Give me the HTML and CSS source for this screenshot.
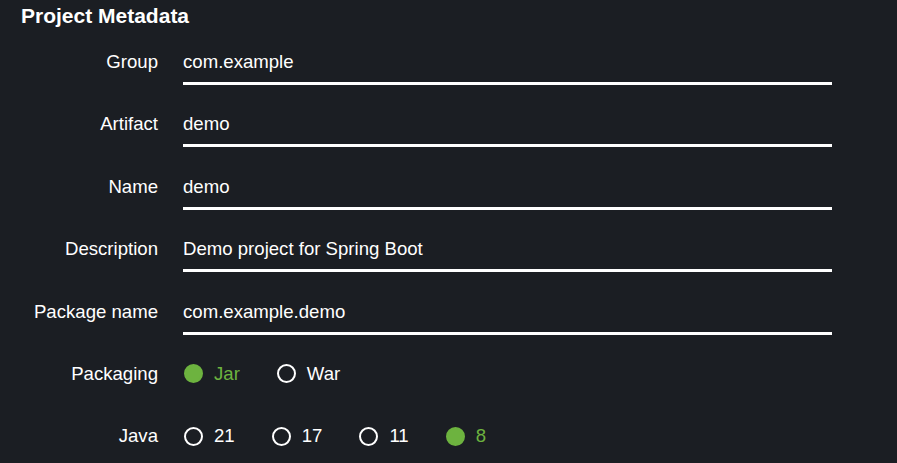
FILE: index.html
```html
<!DOCTYPE html>
<html lang="en">
<head>
<meta charset="utf-8">
<title>Project Metadata</title>
<link rel="stylesheet" href="styles.css">
</head>
<body>
<section class="panel">
  <h1 class="title">Project Metadata</h1>
  <div class="form">
    <label class="label">Group</label>
    <div class="field"><span class="value">com.example</span></div>

    <label class="label">Artifact</label>
    <div class="field"><span class="value">demo</span></div>

    <label class="label">Name</label>
    <div class="field"><span class="value">demo</span></div>

    <label class="label">Description</label>
    <div class="field"><span class="value">Demo project for Spring Boot</span></div>

    <label class="label">Package name</label>
    <div class="field"><span class="value">com.example.demo</span></div>

    <label class="label">Packaging</label>
    <div class="radios">
      <span class="radio checked"><span class="dot"></span>Jar</span>
      <span class="radio"><span class="dot"></span>War</span>
    </div>

    <label class="label">Java</label>
    <div class="radios">
      <span class="radio"><span class="dot"></span>21</span>
      <span class="radio"><span class="dot"></span>17</span>
      <span class="radio"><span class="dot"></span>11</span>
      <span class="radio checked"><span class="dot"></span>8</span>
    </div>
  </div>
</section>
</body>
</html>
```
FILE: styles.css
```css
html, body {
  margin: 0;
  padding: 0;
  background: #1b1e23;
}
body {
  font-family: "Liberation Sans", Arial, sans-serif;
  color: #ffffff;
  width: 897px;
  height: 463px;
  overflow: hidden;
}
.panel {
  padding-top: 4px;
}
.title {
  margin: 0;
  padding-left: 21px;
  font-size: 21px;
  line-height: 24px;
  font-weight: bold;
}
.form {
  display: grid;
  grid-template-columns: 158px 649px;
  column-gap: 25px;
  grid-auto-rows: 35px;
  row-gap: 27.4px;
  margin-top: 22px;
  font-size: 18.6px;
  line-height: 24px;
}
.label {
  text-align: right;
}
.field {
  padding-bottom: 8px;
  border-bottom: 3px solid #ffffff;
  height: 24px;
}
.radios {
  display: flex;
  align-items: center;
  height: 24px;
  gap: 37px;
  padding-left: 1px;
}
.radio {
  display: flex;
  align-items: center;
  gap: 11px;
}
.dot {
  width: 15px;
  height: 15px;
  border: 2px solid #ffffff;
  border-radius: 50%;
}
.radio.checked {
  color: #6db33f;
}
.radio.checked .dot {
  border-color: #6db33f;
  background: #6db33f;
}
```
